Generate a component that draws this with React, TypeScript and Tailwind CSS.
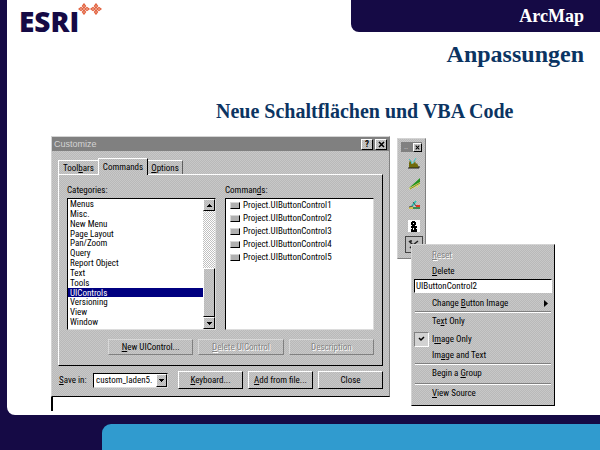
import React from "react";

const categories = [
  "Menus", "Misc.", "New Menu", "Page Layout", "Pan/Zoom", "Query", "Report Object",
  "Text", "Tools", "UIControls", "Versioning", "View", "Window",
];
const commands = [1, 2, 3, 4, 5].map((n) => `Project.UIButtonControl${n}`);

const face =
  "bg-[#c0c0c0] bg-[repeating-conic-gradient(#c8c8c8_0_25%,#b9b9b9_0_50%)] bg-[length:2px_2px]";
const raised = "border border-t-white border-l-white border-r-black border-b-black";
const flat = "border border-t-[#d8d8d8] border-l-[#d8d8d8] border-r-[#808080] border-b-[#808080]";
const sunken = "border border-t-black border-l-black border-r-[#dcdcdc] border-b-[#dcdcdc]";

function Key({ children }: { children: React.ReactNode }) {
  return <span className="underline underline-offset-1">{children}</span>;
}

function Arrow({ up = false }: { up?: boolean }) {
  return (
    <svg width="5" height="3" viewBox="0 0 5 3" shapeRendering="crispEdges" aria-hidden="true">
      <path d={up ? "M2 0h1v1h1v1h1v1H0V2h1V1h1z" : "M0 0h5v1H4v1H3v1H2V2H1V1H0z"} />
    </svg>
  );
}

function Cross({ size = 7 }: { size?: number }) {
  return (
    <svg width={size} height={size} viewBox="0 0 7 7" aria-hidden="true">
      <path d="M1 1l5 5M6 1L1 6" stroke="#000" strokeWidth="1.5" />
    </svg>
  );
}

function Logo() {
  return (
    <div className="ml-[12px] mt-[3px] flex h-[34px] items-start" aria-label="ESRI">
      <span className="mt-px font-['Open_Sans',sans-serif] text-[28px] font-extrabold leading-[34px] text-[#150a45]">ESRI</span>
      <svg className="-ml-px" width="24" height="12" viewBox="0 0 24 12" aria-hidden="true">
        {[6, 18].map((x) => (
          <g key={x} fill="#fbe3d9" stroke="#e2623f" strokeWidth="1.3">
            <path d={`M${x} 5L${x - 1.5} 3L${x} 1L${x + 1.5} 3zM${x} 11L${x - 1.5} 9L${x} 7L${x + 1.5} 9z`} />
            <path d={`M${x - 1} 6L${x - 3} 4.500L${x - 5} 6L${x - 3} 7.500zM${x + 5} 6L${x + 3} 4.500L${x + 1} 6L${x + 3} 7.500z`} />
          </g>
        ))}
      </svg>
    </div>
  );
}

function Dialog() {
  return (
    <section className={`${face} w-[339px] shrink-0 border border-t-[#d4d4d4] border-l-[#d4d4d4] border-r-[#808080] border-b-black`}>
      <header className="flex h-[14px] items-center gap-[2px] bg-[#808080] pr-[2px] pl-[2px]">
        <h3 className="flex-1 font-['Liberation_Sans',sans-serif] text-[9px] leading-[12px] text-[#d4d4d4]">Customize</h3>
        <button aria-label="Help" className={`${face} ${raised} flex h-[11px] w-[12px] items-center justify-center text-[9px] font-bold leading-[9px]`}>?</button>
        <button aria-label="Close window" className={`${face} ${raised} flex h-[11px] w-[12px] items-center justify-center`}><Cross /></button>
      </header>

      <div role="tablist" className="mx-[6px] mt-[7px] flex h-[16px] items-end">
        <button role="tab" aria-selected="false" className="h-[14px] w-[40px] border-t border-l border-white text-center">Tool<Key>b</Key>ars</button>
        <button role="tab" aria-selected="true" className={`${face} relative -mb-px h-[17px] w-[50px] border border-t-white border-b-0 border-l-white border-r-black text-center`}>Commands</button>
        <button role="tab" aria-selected="false" className="h-[14px] w-[35px] border-t border-r border-t-white border-r-[#606060] text-center"><Key>O</Key>ptions</button>
      </div>

      <div role="tabpanel" className={`${raised} mx-[6px] h-[192px] px-[8px] pt-[9px]`}>
        <div className="flex justify-between">
          <div className="w-[149px]">
            <h4 id="cat" className="h-[14px]">Cate<Key>g</Key>ories:</h4>
            <div className={`${sunken} flex h-[132px] bg-white`}>
              <ul role="listbox" aria-labelledby="cat" className="grid h-[128px] flex-1 grid-rows-13 leading-[10px]">
                {categories.map((c) => (
                  <li key={c} role="option" aria-selected={c === "UIControls"}
                    className={c === "UIControls" ? "bg-[#000080] pl-[2px] text-white" : "pl-[2px]"}>{c}</li>
                ))}
              </ul>
              <div className="flex w-[12px] flex-col bg-[#e0e0e0] bg-[repeating-conic-gradient(#ffffff_0_25%,#c0c0c0_0_50%)] bg-[length:2px_2px]">
                <button aria-label="Scroll up" className={`${face} ${raised} flex h-[12px] items-center justify-center`}><Arrow up /></button>
                <div className="flex-1" />
                <div className={`${face} ${raised} h-[49px]`} />
                <button aria-label="Scroll down" className={`${face} ${raised} flex h-[12px] items-center justify-center`}><Arrow /></button>
              </div>
            </div>
          </div>
          <div className="w-[149px]">
            <h4 id="cmd" className="h-[14px]">Comman<Key>d</Key>s:</h4>
            <ul role="listbox" aria-labelledby="cmd" className={`${sunken} h-[132px] bg-white leading-[13px]`}>
              {commands.map((c) => (
                <li key={c} role="option" aria-selected="false" className="flex items-center gap-[3px] pl-[4px]">
                  <span className="h-[7px] w-[10px] border border-t-[#d8d8d8] border-l-[#d8d8d8] border-r-black border-b-black bg-[#b0b0b0]" />
                  {c}
                </li>
              ))}
            </ul>
          </div>
        </div>
        <div className="mt-[9px] ml-[41px] grid grid-cols-3 gap-[5px]">
          <button className={`${flat} h-[16px]`}><Key>N</Key>ew UIControl...</button>
          <button disabled className={`${flat} h-[16px] text-[#858585] [text-shadow:1px_1px_0_#fff]`}><Key>D</Key>elete UIControl</button>
          <button disabled className={`${flat} h-[16px] text-[#858585] [text-shadow:1px_1px_0_#fff]`}>Description</button>
        </div>
      </div>

      <footer className="mx-[6px] flex items-center pt-[5px] pb-[7px]">
        <label htmlFor="save" className="w-[35px] pl-[1px]"><Key>S</Key>ave in:</label>
        <div className={`${sunken} mr-[10px] flex h-[15px] w-[75px] bg-white`}>
          <select id="save" className="min-w-0 flex-1 appearance-none pl-[2px] leading-[12px]">
            <option>custom_laden5.</option>
          </select>
          <span className={`${face} ${raised} flex w-[11px] items-center justify-center`}><Arrow /></span>
        </div>
        <div className="grid flex-1 grid-cols-3 gap-[5px]">
          <button className={`${raised} h-[18px]`}><Key>K</Key>eyboard...</button>
          <button className={`${raised} h-[18px]`}><Key>A</Key>dd from file...</button>
          <button className={`${raised} h-[18px]`}>Close</button>
        </div>
      </footer>
    </section>
  );
}

function Rule() {
  return <hr className="mx-[3px] h-[2px] border-t border-b border-t-[#808080] border-b-white" />;
}

const item = "block h-[16px] w-full pl-[20px] text-left";

function ContextMenu() {
  return (
    <div role="menu" className={`${face} absolute top-[106px] left-[14px] w-[144px] border border-t-[#d4d4d4] border-l-[#d4d4d4] border-r-black border-b-black pt-[2px] pb-[4px] leading-[14px]`}>
      <button role="menuitem" disabled className={`${item} text-[#858585] [text-shadow:1px_1px_0_#fff]`}><Key>R</Key>eset</button>
      <button role="menuitem" className={item}><Key>D</Key>elete</button>
      <input aria-label="Name" defaultValue="UIButtonControl2" className="mx-[2px] block h-[14px] w-[138px] border border-t-black border-r-white border-b-white border-l-black bg-white pl-[1px]" />
      <button role="menuitem" className="mt-[2px] flex h-[16px] w-full items-center justify-between pr-[6px] pl-[20px] text-left">
        <span>Change <Key>B</Key>utton Image</span>
        <svg width="4" height="7" viewBox="0 0 4 7" aria-hidden="true"><path d="M0 0l4 3.500L0 7z" /></svg>
      </button>
      <Rule />
      <button role="menuitem" className={item}>Te<Key>x</Key>t Only</button>
      <div className="h-[2px]" />
      <button role="menuitemcheckbox" aria-checked="true" className="flex h-[16px] w-full items-center gap-[3px] pl-[2px] text-left">
        <span className="flex h-[15px] w-[15px] items-center justify-center border border-t-[#808080] border-r-white border-b-white border-l-[#808080] bg-[#d2d2d2]">
          <svg width="7" height="6" viewBox="0 0 7 6" aria-hidden="true"><path d="M1 2l2 2 3-3" fill="none" stroke="#000" strokeWidth="1.500" /></svg>
        </span>
        <span>I<Key>m</Key>age Only</span>
      </button>
      <button role="menuitem" className={item}>Im<Key>a</Key>ge and Text</button>
      <Rule />
      <button role="menuitem" className={item}>Begin a <Key>G</Key>roup</button>
      <div className="h-[2px]" />
      <Rule />
      <button role="menuitem" className={item}><Key>V</Key>iew Source</button>
    </div>
  );
}

const tool = "flex h-[21px] w-full items-center pl-[3px]";

function Toolbar() {
  return (
    <aside className="relative mt-[2px] ml-[7px]">
      <div className={`${face} h-[121px] w-[29px] border border-t-[#d4d4d4] border-l-[#d4d4d4] border-r-[#808080] border-b-[#808080] px-[3px] pt-[3px]`}>
        <header className="flex h-[10px] items-center justify-between bg-[#808080] pl-[3px] text-[8px] leading-[8px] text-[#d0d0d0]">
          <span>..</span>
          <button aria-label="Close toolbar" className={`${face} ${raised} flex h-[9px] w-[9px] items-center justify-center`}><Cross size={5} /></button>
        </header>
        <div className="pl-[4px]">
          <button aria-label="Terrain" className={tool}>
            <svg width="12" height="12" viewBox="0 0 12 12">
              <path d="M1 11V6l1-3 2 4 2-1 1-2 1 3 1-1 2 5z" fill="#6f6b0c" />
              <path d="M1 2l2 2 1 3M5 6l3-5" stroke="#45c8c4" fill="none" />
              <path d="M0 11h11V9" stroke="#222" fill="none" />
            </svg>
          </button>
          <button aria-label="Slope" className={tool}>
            <svg width="14" height="14" viewBox="0 0 14 14">
              <path d="M1 11L12 2v6l-1 1-1-2v4l-2-2-2 3-1-2-3 3z" fill="#d9dd72" />
              <path d="M1 11L12 1v4L3 10z" fill="#249220" />
              <path d="M2 12l10-6" stroke="#8f8a2c" fill="none" />
            </svg>
          </button>
          <button aria-label="Profile" className={tool}>
            <svg width="12" height="10" viewBox="0 0 12 10">
              <path d="M8 1L4 6" stroke="#31c6b7" strokeWidth="2" fill="none" />
              <path d="M1 8h4" stroke="#d6c52c" strokeWidth="1.500" />
              <path d="M5 8h7" stroke="#137a30" strokeWidth="1.500" />
              <path d="M8 5h4v2H8z" fill="#e23524" />
              <path d="M5 2l3 4M1 7l4-1" stroke="#333" strokeWidth=".8" />
            </svg>
          </button>
          <button aria-label="Observer" className={tool}>
            <svg width="12" height="12" viewBox="0 0 12 12" shapeRendering="crispEdges">
              <path d="M0 0h12v12H0z" fill="#fff" />
              <path d="M4 1h3v1h1v3H7v1h2v2H8v1h1v3H3V9h1V8H3V6h1V5H3V2h1z" />
              <path d="M5 3h1v1H5zM5 8h1v2H5z" fill="#fff" />
            </svg>
          </button>
          <button aria-label="Custom button" aria-pressed="true" className="flex h-[17px] w-[18px] items-center justify-center border border-[#444] bg-[#bdbdbd]">
            <svg width="12" height="12" viewBox="0 0 12 12">
              <path d="M1 2l4 4 5-4M5 6L2 9M5 6l4 4M2 2h2" stroke="#222" strokeWidth="1.500" fill="none" />
            </svg>
          </button>
        </div>
      </div>
      <ContextMenu />
    </aside>
  );
}

export default function App() {
  return (
    <div className="flex min-h-screen flex-col bg-[#150a45] text-black">
      <main className="ml-[7px] flex-1 rounded-bl-[8px] bg-white">
        <div className="flex items-start justify-between">
          <Logo />
          <div className="h-[32px] w-[42%] rounded-bl-[8px] bg-[#150a45] pr-4 text-right font-['Liberation_Serif',serif] text-[18px] font-bold leading-[32px] text-white">ArcMap</div>
        </div>
        <h1 className="mt-px pr-4 text-right font-['Liberation_Serif',serif] text-[24px] font-bold leading-[32px] text-[#0b3462]">Anpassungen</h1>
        <h2 className="mt-[29px] ml-[209px] font-['Liberation_Serif',serif] text-[20px] font-bold leading-[24px] text-[#0b3462]">Neue Schaltflächen und VBA Code</h2>
        <div className="mt-[13px] ml-[44px] flex items-start font-['Roboto_Condensed',Roboto,sans-serif] text-[9px] leading-[12px]">
          <div>
            <Dialog />
            <div className="h-[14px] border-l-2 border-black" />
          </div>
          <Toolbar />
        </div>
      </main>
      <footer className="pt-[9px] pl-[17%]">
        <div className="h-[26px] rounded-tl-[9px] bg-[#309bcf]" />
      </footer>
    </div>
  );
}
